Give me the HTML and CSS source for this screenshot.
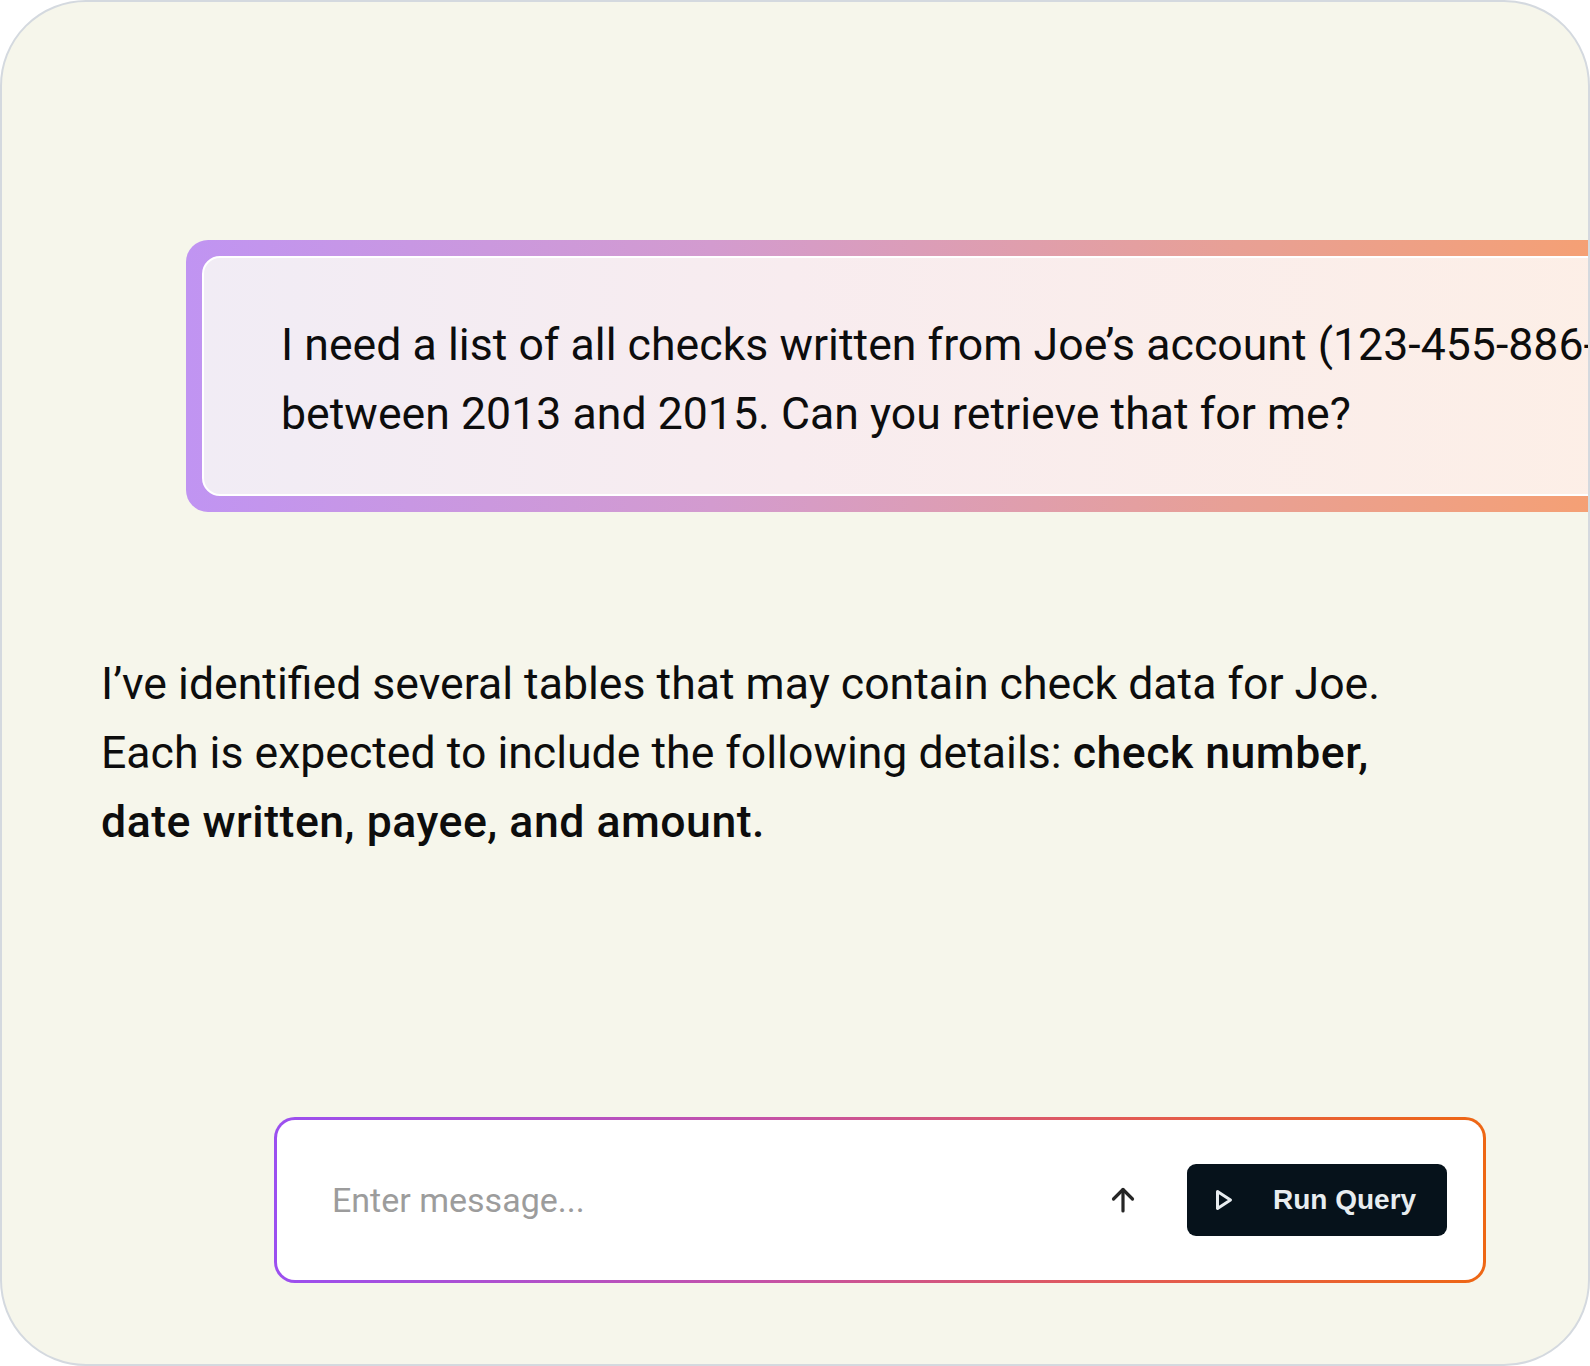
FILE: index.html
```html
<!DOCTYPE html>
<html lang="en">
<head>
<meta charset="utf-8">
<title>Chat</title>
<link rel="stylesheet" href="styles.css">
</head>
<body>
<div class="frame">
  <div class="bubble">
    <div class="bubble-inner">
      <p class="bubble-text">I need a list of all checks written from Joe’s account (123-455-886-0912)<br>between 2013 and 2015. Can you retrieve that for me?</p>
    </div>
  </div>

  <p class="reply">I’ve identified several tables that may contain check data for Joe. Each is expected to include the following details: <strong>check number, date written, payee, and amount.</strong></p>

  <div class="composer">
    <input class="composer-input" type="text" placeholder="Enter message...">
    <button class="send" type="button" aria-label="Send">
      <svg width="28" height="28" viewBox="0 0 28 28" fill="none" stroke="#262626" stroke-width="3.2" stroke-linecap="round" stroke-linejoin="round"><path d="M14 25V3.5"/><path d="M4.5 13L14 3.5L23.5 13"/></svg>
    </button>
    <button class="run" type="button">
      <svg class="run-icon" width="18" height="22" viewBox="0 0 18 22" fill="none" stroke="#e8edf0" stroke-width="3" stroke-linejoin="round"><path d="M2.5 2.5L15.5 11L2.5 19.5Z"/></svg>
      <span>Run Query</span>
    </button>
  </div>
</div>
</body>
</html>
```
FILE: styles.css
```css
* { box-sizing: border-box; }

html, body {
  margin: 0;
  padding: 0;
  background: #ffffff;
}

.frame {
  width: 1590px;
  height: 1366px;
  border: 2px solid #d4d9df;
  border-radius: 86px;
  background: #f6f6eb;
  overflow: hidden;
  display: flex;
  flex-direction: column;
  align-items: flex-start;
  font-family: Roboto, "Liberation Sans", sans-serif;
  color: #0d0d0d;
}

.bubble {
  margin: 238px 0 0 184px;
  width: 1500px;
  flex-shrink: 0;
  padding: 16px;
  border-radius: 22px;
  background: linear-gradient(90deg, #c094f2 0%, #d39bcf 35%, #e8a095 70%, #f8a06c 100%);
}

.bubble-inner {
  border: 2px solid #ffffff;
  border-radius: 18px;
  background: linear-gradient(90deg, #f1ecf5 0%, #f8ecef 40%, #fdefe6 100%);
  padding: 53px 40px 45px 77px;
}

.bubble-text {
  margin: 0;
  font-size: 44.6px;
  line-height: 69px;
  letter-spacing: 0.03px;
  white-space: nowrap;
  color: #0d0d0d;
}

.reply {
  margin: 138px 0 0 99px;
  max-width: 1300px;
  font-size: 44.6px;
  line-height: 69px;
  color: #0d0d0d;
}

.reply strong {
  font-weight: 500;
  letter-spacing: 0.5px;
}

.composer {
  margin: auto 0 81px 272px;
  width: 1212px;
  height: 166px;
  border: 3px solid transparent;
  border-radius: 21px;
  background:
    linear-gradient(#ffffff, #ffffff) padding-box,
    linear-gradient(90deg, #9b4ff0 0%, #c452a8 40%, #e25a55 70%, #ee6714 100%) border-box;
  display: flex;
  align-items: center;
  padding: 0 36px 0 55px;
}

.composer-input {
  flex: 1;
  min-width: 0;
  border: none;
  outline: none;
  background: transparent;
  font-family: Roboto, "Liberation Sans", sans-serif;
  font-size: 34px;
  color: #222;
  padding: 0;
}

.composer-input::placeholder {
  color: #9c9c9c;
}

.send {
  border: none;
  background: transparent;
  padding: 0;
  margin-right: 50px;
  display: flex;
  align-items: center;
  justify-content: center;
  width: 28px;
  height: 28px;
}

.run {
  width: 260px;
  height: 72px;
  border: none;
  border-radius: 9px;
  background: #06121b;
  color: #e8edf0;
  display: flex;
  align-items: center;
  padding: 0 0 0 28px;
  gap: 40px;
  font-family: "Liberation Sans", Arial, sans-serif;
  font-weight: 700;
  font-size: 28px;
}

.run-icon {
  flex-shrink: 0;
}
```
